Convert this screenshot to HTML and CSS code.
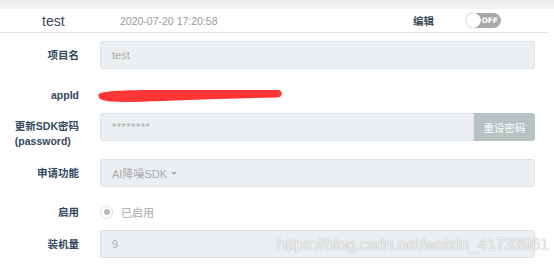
FILE: index.html
```html
<!DOCTYPE html>
<html lang="zh-CN">
<head>
<meta charset="utf-8">
<title>test</title>
<link rel="stylesheet" href="styles.css">
</head>
<body>
<div class="topbar"></div>
<header class="head">
  <span class="head-name">test</span>
  <span class="head-date">2020-07-20 17:20:58</span>
  <span class="head-edit">编辑</span>
  <span class="switch"><span class="switch-knob"></span><span class="switch-text">OFF</span></span>
</header>
<form class="form">
  <div class="row row-first">
    <label class="label">项目名</label>
    <div class="input">test</div>
  </div>
  <div class="row row-static">
    <label class="label">appId</label>
    <div class="static">
      <svg class="redact" width="186" height="14" viewBox="0 0 186 14">
        <path d="M2 5 C6 1 40 1 80 1 L181 1 C186 1 186 8 181 8.5 L120 10 C80 11 50 13 25 13 C8 13 -1 11 2 5 Z" fill="#ff3434"/>
      </svg>
    </div>
  </div>
  <div class="row row-top row-pw">
    <label class="label"><span class="label-inner">更新SDK密码<br>(password)</span></label>
    <div class="group">
      <div class="input input-group">********</div>
      <button type="button" class="btn">重设密码</button>
    </div>
  </div>
  <div class="row row-func">
    <label class="label">申请功能</label>
    <div class="input">AI降噪SDK <span class="caret"></span></div>
  </div>
  <div class="row row-static row-enable">
    <label class="label">启用</label>
    <div class="static radio-line"><span class="radio"><span class="radio-dot"></span></span><span class="radio-text">已启用</span></div>
  </div>
  <div class="row row-count">
    <label class="label">装机量</label>
    <div class="input">9</div>
  </div>
</form>
<div class="watermark">https://blog.csdn.net/weixin_41733961</div>
</body>
</html>
```
FILE: styles.css
```css
html, body {
  margin: 0;
  padding: 0;
  background: #fff;
  width: 554px;
  height: 266px;
  overflow: hidden;
  position: relative;
  font-family: "Liberation Sans", Arial, "Noto Sans CJK SC", sans-serif;
}
.topbar {
  height: 9px;
  background: linear-gradient(#ececec, #f3f3f3);
}
.head {
  width: 549px;
  border-bottom: 1px solid #dde5ee;
  display: flex;
  align-items: center;
  box-sizing: border-box;
  height: 24px;
}
.head-name {
  margin-left: 42px;
  width: 78px;
  font-size: 14px;
  color: #3b4a5a;
}
.head-date {
  font-size: 10.5px;
  color: #9a9a9a;
  width: 293px;
}
.head-edit {
  font-size: 10.5px;
  font-weight: bold;
  color: #3b4a5a;
  width: 53px;
}
.switch {
  position: relative;
  width: 35px;
  height: 15px;
  border-radius: 8px;
  background: #a8a8a8;
  display: flex;
  align-items: center;
  justify-content: flex-end;
}
.switch-knob {
  position: absolute;
  left: 0;
  top: 0;
  width: 15px;
  height: 15px;
  border-radius: 50%;
  background: #fff;
  box-shadow: 0 0 2px rgba(0,0,0,.25);
}
.switch-text {
  font-family: "DejaVu Sans", sans-serif;
  font-size: 7.5px;
  font-weight: bold;
  color: #fff;
  margin-right: 3px;
}
.form {
  margin: 0;
  padding-top: 8px;
}
.row {
  display: grid;
  grid-template-columns: 79px 435px;
  column-gap: 21px;
  align-items: center;
}
.row-top { align-items: start; }
.row-static { height: 24px; margin-top: 14px; }
.row-pw { margin-top: 6px; height: 28px; }
.row-func { margin-top: 18px; }
.row-enable { margin-top: 13px; }
.row-count { margin-top: 6px; }
.label {
  text-align: right;
  font-size: 10.5px;
  font-weight: bold;
  color: #34495e;
  line-height: 15px;
}
.row-top .label { padding-top: 6px; }
.label-inner {
  display: inline-block;
  text-align: left;
}
.input {
  height: 28px;
  box-sizing: border-box;
  border: 1px solid #dae1e8;
  background: #eceff1;
  border-radius: 3px;
  padding: 0 11px;
  display: flex;
  align-items: center;
  font-size: 11px;
  color: #a9a9a9;
}
.group {
  display: flex;
  height: 28px;
}
.input-group {
  flex: 1;
  border-radius: 3px 0 0 3px;
  letter-spacing: 0.5px;
}
.btn {
  width: 61px;
  height: 28px;
  border: 0;
  background: #b7c2c2;
  color: #fff;
  font-family: "Noto Sans CJK SC", sans-serif;
  font-size: 10.5px;
  border-radius: 0 3px 3px 0;
  padding: 0;
}
.caret {
  display: inline-block;
  width: 0;
  height: 0;
  border-left: 3px solid transparent;
  border-right: 3px solid transparent;
  border-top: 3px solid #a9a9a9;
  margin-left: 4px;
  margin-top: 1px;
}
.static {
  display: flex;
  align-items: center;
  height: 24px;
}
.redact {
  display: block;
  margin-left: -3px;
  margin-top: 1px;
}
.radio {
  width: 11px;
  height: 11px;
  border: 1px solid #e0e0e0;
  border-radius: 50%;
  display: flex;
  align-items: center;
  justify-content: center;
  background: #fff;
}
.radio-dot {
  width: 6px;
  height: 6px;
  border-radius: 50%;
  background: #b8b8b8;
}
.radio-text {
  margin-left: 8px;
  font-size: 11px;
  color: #a9a9a9;
}
.watermark {
  position: absolute;
  left: 277px;
  top: 236px;
  font-size: 16px;
  line-height: 18px;
  color: rgba(255,255,255,.9);
  text-shadow: 0 0 1px rgba(0,0,0,.45);
  white-space: nowrap;
}
```
